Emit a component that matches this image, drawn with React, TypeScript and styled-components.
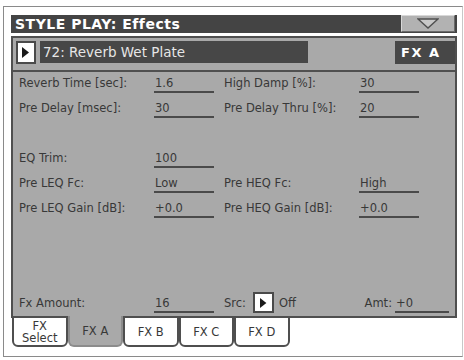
import styled, { createGlobalStyle } from 'styled-components';

// Parameter rows for the Reverb Wet Plate effect
type Param = { label: string; value: string };
const rows: Param[][] = [
  [
    { label: 'Reverb Time [sec]:', value: '1.6' },
    { label: 'High Damp [%]:', value: '30' },
  ],
  [
    { label: 'Pre Delay [msec]:', value: '30' },
    { label: 'Pre Delay Thru [%]:', value: '20' },
  ],
  [],
  [{ label: 'EQ Trim:', value: '100' }],
  [
    { label: 'Pre LEQ Fc:', value: 'Low' },
    { label: 'Pre HEQ Fc:', value: 'High' },
  ],
  [
    { label: 'Pre LEQ Gain [dB]:', value: '+0.0' },
    { label: 'Pre HEQ Gain [dB]:', value: '+0.0' },
  ],
];

const tabs = ['FX\nSelect', 'FX A', 'FX B', 'FX C', 'FX D'];
const activeTab = 1;

const PlayIcon = ({ size = 11 }: { size?: number }) => (
  <svg width={size * 0.64} height={size} viewBox="0 0 7 11">
    <polygon points="0,0 7,5.5 0,11" fill="#1a1a1a" />
  </svg>
);

const App = () => {
  return (
    <>
      <GlobalStyle />
      <Frame>
        <TitleBar>
          <Title>STYLE PLAY: Effects</Title>
          <MenuButton>
            <svg width="22" height="11" viewBox="0 0 22 11">
              <polygon points="1,1 21,1 11,10" fill="#c8c8c8" stroke="#505050" strokeWidth="1.5" />
            </svg>
          </MenuButton>
        </TitleBar>
        <Panel>
          <Header>
            <PlayButton>
              <PlayIcon />
            </PlayButton>
            <NameBar>72: Reverb Wet Plate</NameBar>
            <Badge>FX A</Badge>
          </Header>
          <Separator />
          <Params>
            {rows.map((row, i) => (
              <Row key={i}>
                {row.map((p) => (
                  <ParamCell key={p.label}>
                    <Label>{p.label}</Label>
                    <Value>{p.value}</Value>
                  </ParamCell>
                ))}
              </Row>
            ))}
          </Params>
          <Footer>
            <Label>Fx Amount:</Label>
            <Value>16</Value>
            <SrcLabel>Src:</SrcLabel>
            <PlayButton $small>
              <PlayIcon size={10} />
            </PlayButton>
            <SrcValue>Off</SrcValue>
            <AmtLabel>Amt:</AmtLabel>
            <Value $width={54}>+0</Value>
          </Footer>
        </Panel>
        <Tabs>
          {tabs.map((t, i) => (
            <Tab key={t} $active={i === activeTab}>
              {t}
            </Tab>
          ))}
        </Tabs>
      </Frame>
    </>
  );
};

export default App;

const GlobalStyle = createGlobalStyle`
  html, body {
    margin: 0;
    padding: 0;
    background: #ffffff;
  }
  body {
    font-family: "DejaVu Sans", "Liberation Sans", sans-serif;
  }
`;

const Frame = styled.div`
  box-sizing: border-box;
  width: 460px;
  height: 351px;
  margin: 6px 0 0 3px;
  padding: 8px 5px 0 7px;
  border: 1px solid #8a8a8a;
  border-right-color: #c8c8c8;
  display: flex;
  flex-direction: column;
`;

const TitleBar = styled.div`
  height: 18px;
  background: #444444;
  display: flex;
  align-items: flex-start;
  padding-left: 4px;
  padding-right: 2px;
`;

const Title = styled.div`
  color: #ffffff;
  font-weight: bold;
  font-size: 14px;
  letter-spacing: 0.5px;
  line-height: 18px;
`;

const MenuButton = styled.div`
  box-sizing: border-box;
  margin-left: auto;
  width: 54px;
  height: 17px;
  background: #b2b2b2;
  border: 1px solid #d8d8d8;
  border-right-color: #6a6a6a;
  border-bottom-color: #6a6a6a;
  display: flex;
  align-items: center;
  justify-content: center;
`;

const Panel = styled.div`
  box-sizing: border-box;
  margin-top: 3px;
  height: 282px;
  background: #a9a9a9;
  border: 2px solid #4f4f4f;
  display: flex;
  flex-direction: column;
`;

const Header = styled.div`
  display: flex;
  align-items: flex-start;
  padding: 3px 0 0 3px;
`;

const PlayButton = styled.div<{ $small?: boolean }>`
  box-sizing: border-box;
  width: ${(p) => (p.$small ? 21 : 20)}px;
  height: ${(p) => (p.$small ? 21 : 23)}px;
  background: #ffffff;
  border: 2px solid #4a4a4a;
  display: flex;
  align-items: center;
  justify-content: center;
  flex-shrink: 0;
`;

const NameBar = styled.div`
  width: 268px;
  height: 22px;
  margin-left: 4px;
  background: #474747;
  color: #e6e6e6;
  font-size: 13.5px;
  line-height: 22px;
  padding-left: 3px;
  box-sizing: border-box;
`;

const Badge = styled.div`
  margin-left: auto;
  width: 60px;
  height: 23px;
  background: #474747;
  color: #ffffff;
  font-weight: bold;
  font-size: 13px;
  letter-spacing: 1.5px;
  line-height: 23px;
  padding-left: 6px;
  box-sizing: border-box;
`;

const Separator = styled.div`
  height: 2px;
  margin-top: 6px;
  background: #505050;
`;

const Params = styled.div`
  display: flex;
  flex-direction: column;
  padding-left: 6px;
`;

const Row = styled.div`
  height: 25px;
  display: grid;
  grid-template-columns: 205px 205px;
`;

const ParamCell = styled.div`
  display: flex;
  align-items: flex-start;
`;

const Label = styled.div`
  width: 135px;
  height: 21px;
  flex-shrink: 0;
  box-sizing: border-box;
  padding-top: 4px;
  font-size: 11.5px;
  line-height: 14px;
  color: #383838;
  white-space: nowrap;
`;

const Value = styled.div<{ $width?: number }>`
  width: ${(p) => p.$width ?? 60}px;
  height: 21px;
  flex-shrink: 0;
  box-sizing: border-box;
  padding: 4px 0 0 1px;
  border-bottom: 2px solid #4a4a4a;
  font-size: 11.5px;
  line-height: 14px;
  color: #383838;
`;

const Footer = styled.div`
  margin-top: auto;
  margin-bottom: 3px;
  display: flex;
  align-items: flex-end;
  padding: 0 6px;
`;

const SrcLabel = styled(Label)`
  width: 29px;
  margin-left: 10px;
`;

const SrcValue = styled(Label)`
  width: auto;
  margin-left: 5px;
`;

const AmtLabel = styled(Label)`
  width: auto;
  margin-left: auto;
  padding-right: 3px;
`;

const Tabs = styled.div`
  display: flex;
  margin-top: -2px;
  padding-left: 1px;
`;

const Tab = styled.div<{ $active?: boolean }>`
  box-sizing: border-box;
  width: 55.5px;
  height: 31px;
  border: 2px solid ${(p) => (p.$active ? '#8c8c8c' : '#4f4f4f')};
  border-top: ${(p) => (p.$active ? 'none' : '2px solid #4f4f4f')};
  border-radius: 0 0 6px 6px;
  background: ${(p) => (p.$active ? '#a9a9a9' : '#ffffff')};
  color: #383838;
  font-size: 11.5px;
  line-height: 12px;
  white-space: pre-line;
  text-align: center;
  display: flex;
  align-items: center;
  justify-content: center;
`;
